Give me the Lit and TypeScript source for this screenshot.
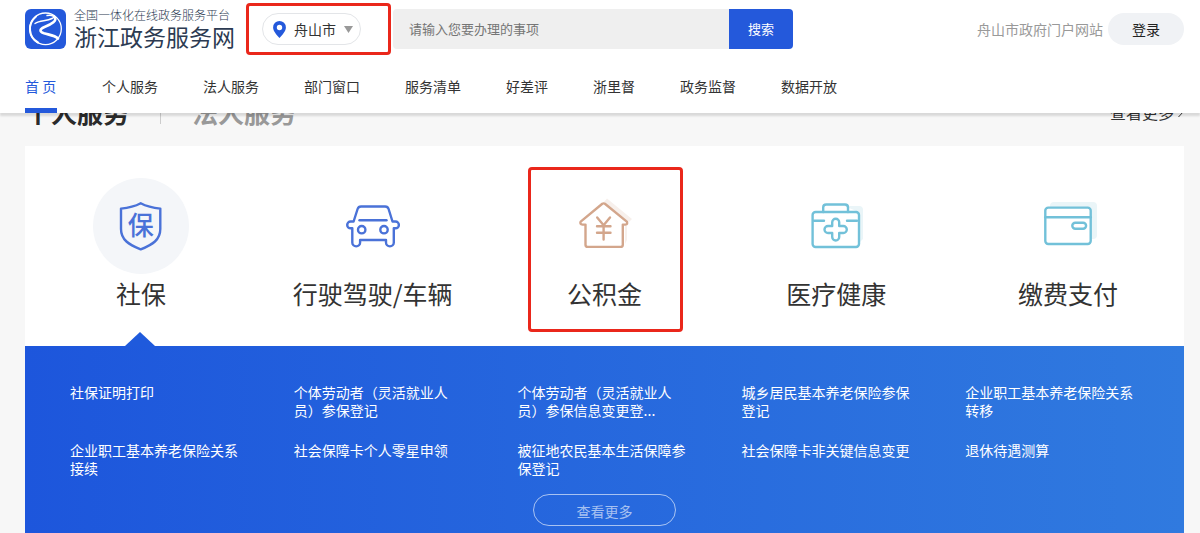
import { LitElement, html, svg, css } from "lit";
import { customElement, state } from "lit/decorators.js";

const NAV = ["首 页", "个人服务", "法人服务", "部门窗口", "服务清单", "好差评", "浙里督", "政务监督", "数据开放"];

const ICONS = {
  shield: svg`
    <g stroke="#4a72d8">
      <path d="M47.7 25.3C42 28.4 35 30 28 30.6V51C28 62 36 66.5 47.7 71.4C59.5 66.5 67.3 62 67.3 51V30.6C60.5 30 53.5 28.4 47.7 25.3Z" />
    </g>
    <text class="mark" x="47.7" y="57" text-anchor="middle">保</text>`,
  car: svg`
    <g stroke="#4a72d8">
      <path d="M27.3 50.3V64.5a3.9 3.9 0 0 0 7.8 0V62H61V64.5a3.9 3.9 0 0 0 7.8 0V50.3H70.5a3.4 3.4 0 0 0 0-6.8H67.5L63.6 31Q62.8 28.5 60.2 28.5H36Q33.4 28.5 32.6 31L28.6 43.5H25.6a3.4 3.4 0 0 0 0 6.8Z" />
      <path d="M34.5 42.3H61.5" />
      <circle cx="36.7" cy="51.7" r="3.7" />
      <circle cx="59" cy="51.7" r="3.7" />
    </g>`,
  house: svg`
    <path d="M51 20.5L76 41L73 44L47 25Z M69 48H71V62L69 66Z" fill="#f7f0ec" />
    <g stroke="#d3a68c">
      <path d="M46.3 25.8Q47.6 24.9 48.9 25.8L70.8 43.6Q72 46.3 69.5 46.6H66.8V66.7Q66.8 68.9 64.6 68.9H31.7Q29.5 68.9 29.5 66.7V46.6H26.5Q23.5 46.3 24.7 43.6Z" />
      <path d="M41.2 39.5L47.6 47.2L54 39.5M47.6 47.2V61.5M41 48.2H54.5M41 54.8H54.5" />
    </g>`,
  medical: svg`
    <path d="M56 28H71Q75 28 75 32V61L71 65V34Z" fill="#eaf5f8" />
    <g stroke="#72c1d9">
      <rect x="24.6" y="34" width="46.4" height="35" rx="3" />
      <path d="M35.2 34V29.5Q35.2 26.5 38.2 26.5H57Q60 26.5 60 29.5V34M26 42.8H36M59 42.8H69" />
      <path d="M44.2 44.2a3.5 3.5 0 0 1 7 0V48H55.3a3.5 3.5 0 0 1 0 7H51.2V59a3.5 3.5 0 0 1-7 0V55H40a3.5 3.5 0 0 1 0-7H44.2Z" />
    </g>`,
  card: svg`
    <rect x="30" y="24" width="47" height="37" rx="4" fill="#eaf5f8" />
    <g stroke="#72c1d9">
      <rect x="25.3" y="29.6" width="45.4" height="36.4" rx="3" fill="#fff" />
      <path d="M25.3 39.3H70.7" />
      <rect x="52.3" y="44.8" width="13.8" height="6" rx="3" />
    </g>`,
};

const TABS = [
  { label: "社保", icon: ICONS.shield },
  { label: "行驶驾驶/车辆", icon: ICONS.car },
  { label: "公积金", icon: ICONS.house, marked: true },
  { label: "医疗健康", icon: ICONS.medical },
  { label: "缴费支付", icon: ICONS.card },
];

const SERVICES = [
  "社保证明打印",
  "个体劳动者（灵活就业人员）参保登记",
  "个体劳动者（灵活就业人员）参保信息变更登...",
  "城乡居民基本养老保险参保登记",
  "企业职工基本养老保险关系转移",
  "企业职工基本养老保险关系接续",
  "社会保障卡个人零星申领",
  "被征地农民基本生活保障参保登记",
  "社会保障卡非关键信息变更",
  "退休待遇测算",
];

const base = css`
  * {
    box-sizing: border-box;
  }
  a {
    color: inherit;
    text-decoration: none;
  }
  button,
  input,
  select {
    margin: 0;
    border: 0;
    font-family: inherit;
  }
  svg {
    display: block;
    flex: none;
  }
  .marker {
    position: absolute;
    border: 3px solid #ea271b;
    border-radius: 4px;
    pointer-events: none;
  }
`;

@customElement("site-header")
class SiteHeader extends LitElement {
  static styles = [
    base,
    css`
      :host {
        display: block;
        position: relative;
        z-index: 2;
        background: #fff;
        box-shadow: 0 3px 2px rgba(0, 0, 0, 0.12);
      }
      .top {
        display: flex;
        align-items: center;
        height: 58px;
        padding: 0 16px 0 25px;
      }
      .brand {
        display: flex;
        align-items: center;
        gap: 8px;
        width: 237px;
        color: #2c3b52;
        white-space: nowrap;
      }
      .name {
        display: flex;
        flex-direction: column;
      }
      .tagline {
        font-size: 12px;
        line-height: 14px;
        font-weight: 300;
      }
      .title {
        font-size: 23px;
        line-height: 28px;
      }
      .city {
        position: relative;
        display: flex;
        align-items: center;
        gap: 8px;
        width: 99px;
        height: 32px;
        padding: 0 7px 0 10px;
        border: 1px solid #e3e5e8;
        border-radius: 16px;
      }
      .city select {
        appearance: none;
        flex: 1;
        min-width: 0;
        padding: 0;
        background: none;
        color: #333;
        font-size: 14px;
        line-height: 20px;
      }
      .city .marker {
        inset: -11px -31px -11px -17px;
      }
      .search {
        display: flex;
        width: 400px;
        height: 40px;
        margin-left: 32px;
        border-radius: 4px;
        overflow: hidden;
      }
      .search input {
        flex: 1;
        min-width: 0;
        padding: 0 16px 2px;
        background: #efefef;
        color: #333;
        font-size: 13px;
      }
      .search input::placeholder {
        color: #757575;
      }
      .search button {
        width: 64px;
        padding: 0 0 2px;
        background: #2459db;
        color: #fff;
        font-size: 13px;
      }
      .account {
        display: flex;
        align-items: center;
        gap: 5px;
        margin-left: auto;
        color: #999;
        font-size: 14px;
      }
      .login {
        width: 76px;
        height: 32px;
        border-radius: 16px;
        background: #f0f2f5;
        color: #222;
        font-size: 14px;
      }
      .nav {
        display: flex;
        gap: 45px;
        padding: 0 25px;
        font-size: 14px;
        line-height: 50px;
        color: #333;
        white-space: nowrap;
      }
      .nav a {
        min-width: 32px;
        height: 55px;
        padding-top: 3px;
        border-bottom: 5px solid transparent;
      }
      .nav .current {
        color: #2459db;
        border-color: #2459db;
      }
    `,
  ];

  render() {
    return html`
      <div class="top">
        <a class="brand" href="#">
          <svg width="41" height="40" viewBox="0 0 41 40" aria-hidden="true">
            <rect width="41" height="40" rx="6" fill="#2459db" />
            <g fill="none" stroke="#fff" stroke-linecap="round">
              <circle cx="20.5" cy="19.8" r="15.8" stroke-width="1.3" />
              <path d="M11 7.500C2 15 3.500 28.500 13 33.500" stroke-width="2" />
              <path d="M10 14.5C15 11 21 12.500 27 9.500C31 7.500 27 5.500 22 6.500" stroke-width="1.400" />
              <path d="M29 7.500C33.500 11.500 26 15.500 19.500 18C14 20.300 14.500 22.800 19 24.300C25 26 30 26.500 33 29.500" stroke-width="2.600" />
            </g>
          </svg>
          <span class="name">
            <span class="tagline">全国一体化在线政务服务平台</span>
            <span class="title">浙江政务服务网</span>
          </span>
        </a>
        <div class="city">
          <svg width="13" height="17" viewBox="0 0 13 17" aria-hidden="true">
            <path fill-rule="evenodd" d="M6.5 0A6.4 6.4 0 0 0 .1 6.4C.1 10 3.5 13.5 6.5 17C9.5 13.5 12.9 10 12.9 6.4A6.4 6.4 0 0 0 6.5 0ZM6.5 3.8A2.7 2.7 0 1 1 6.5 9.2A2.7 2.7 0 0 1 6.5 3.8Z" fill="#2459db" />
          </svg>
          <select aria-label="城市">
            <option>舟山市</option>
          </select>
          <svg width="9" height="7" viewBox="0 0 9 7" aria-hidden="true"><path d="M0 0H9L4.5 7Z" fill="#999" /></svg>
          <span class="marker"></span>
        </div>
        <form class="search" @submit=${(e: Event) => e.preventDefault()}>
          <input type="text" aria-label="搜索事项" placeholder="请输入您要办理的事项" />
          <button type="submit">搜索</button>
        </form>
        <div class="account">
          <a href="#">舟山市政府门户网站</a>
          <button class="login" type="button">登录</button>
        </div>
      </div>
      <nav class="nav">
        ${NAV.map((n, i) => html`<a href="#" class=${i === 0 ? "current" : ""}>${n}</a>`)}
      </nav>
    `;
  }
}

@customElement("service-panel")
class ServicePanel extends LitElement {
  @state() active = 0;

  static styles = [
    base,
    css`
      :host {
        display: flex;
        flex-direction: column;
        flex: 1;
        padding: 0 16px 0 25px;
      }
      .heading {
        display: flex;
        align-items: center;
        height: 66px;
        margin-top: -33px;
        padding-bottom: 2px;
        white-space: nowrap;
      }
      .heading h2 {
        margin: 0;
        font-size: 26px;
        line-height: 36px;
        color: #2b2b2b;
      }
      .heading .other {
        color: #999;
      }
      .divider {
        width: 1px;
        height: 24px;
        margin: 0 31px;
        background: #ccc;
      }
      .all {
        display: flex;
        align-items: center;
        gap: 4px;
        margin-left: auto;
        font-size: 16px;
        line-height: 24px;
        color: #333;
      }
      .tabs {
        display: grid;
        grid-template-columns: repeat(5, 1fr);
        background: #fff;
      }
      .tab {
        position: relative;
        display: flex;
        flex-direction: column;
        align-items: center;
        height: 200px;
        padding: 32px 0 0;
        background: none;
        color: #333;
        font-size: 25px;
        line-height: 38px;
        white-space: nowrap;
      }
      .disc {
        border-radius: 50%;
      }
      .disc g {
        fill: none;
        stroke-width: 2.4;
        stroke-linecap: round;
        stroke-linejoin: round;
      }
      .mark {
        font-size: 26px;
        font-weight: 500;
        fill: #4a72d8;
      }
      .active .disc {
        background: #f4f6f9;
      }
      .active::after {
        content: "";
        position: absolute;
        bottom: 0;
        left: 50%;
        margin-left: -16px;
        border: 15px solid transparent;
        border-top: 0;
        border-bottom: 14px solid #1f5adc;
      }
      .tab .marker {
        top: 21px;
        bottom: 14px;
        left: 50%;
        width: 155px;
        margin-left: -76px;
      }
      .details {
        flex: 1;
        display: flex;
        flex-direction: column;
        align-items: center;
        gap: 17px;
        padding: 37px 20px 7px;
        background: linear-gradient(90deg, #1d56dc, #307adf);
      }
      .list {
        align-self: stretch;
        display: grid;
        grid-template-columns: repeat(5, 1fr);
        row-gap: 22px;
        margin: 0;
        padding: 0;
        list-style: none;
        color: #fff;
        font-size: 14px;
        line-height: 18px;
      }
      .list li {
        min-height: 36px;
        padding: 0 25px;
      }
      .more {
        width: 143px;
        height: 32px;
        padding: 2px 0 0;
        border: 1px solid rgba(255, 255, 255, 0.6);
        border-radius: 16px;
        background: none;
        color: rgba(255, 255, 255, 0.6);
        font-size: 14px;
      }
    `,
  ];

  render() {
    return html`
      <div class="heading">
        <h2>个人服务</h2>
        <span class="divider"></span>
        <h2 class="other">法人服务</h2>
        <a class="all" href="#">
          查看更多
          <svg width="6" height="12" viewBox="0 0 6 12" aria-hidden="true"><path d="M.5 1L5 6L.5 11" fill="none" stroke="#333" /></svg>
        </a>
      </div>
      <div class="tabs">
        ${TABS.map(
          (t, i) => html`
            <button type="button" class="tab ${i === this.active ? "active" : ""}" @click=${() => (this.active = i)}>
              <svg class="disc" width="96" height="96" viewBox="0 0 96 96" aria-hidden="true">${t.icon}</svg>
              <span>${t.label}</span>
              ${t.marked ? html`<span class="marker"></span>` : ""}
            </button>
          `
        )}
      </div>
      <div class="details">
        <ul class="list">
          ${SERVICES.map((s) => html`<li><a href="#">${s}</a></li>`)}
        </ul>
        <button class="more" type="button">查看更多</button>
      </div>
    `;
  }
}

@customElement("app-root")
class AppRoot extends LitElement {
  static styles = css`
    :host {
      display: flex;
      flex-direction: column;
      min-height: 100vh;
      background: #f7f7f7;
      font-family: "Noto Sans CJK SC", "Liberation Sans", sans-serif;
    }
  `;

  render() {
    return html`<site-header></site-header><service-panel></service-panel>`;
  }
}
